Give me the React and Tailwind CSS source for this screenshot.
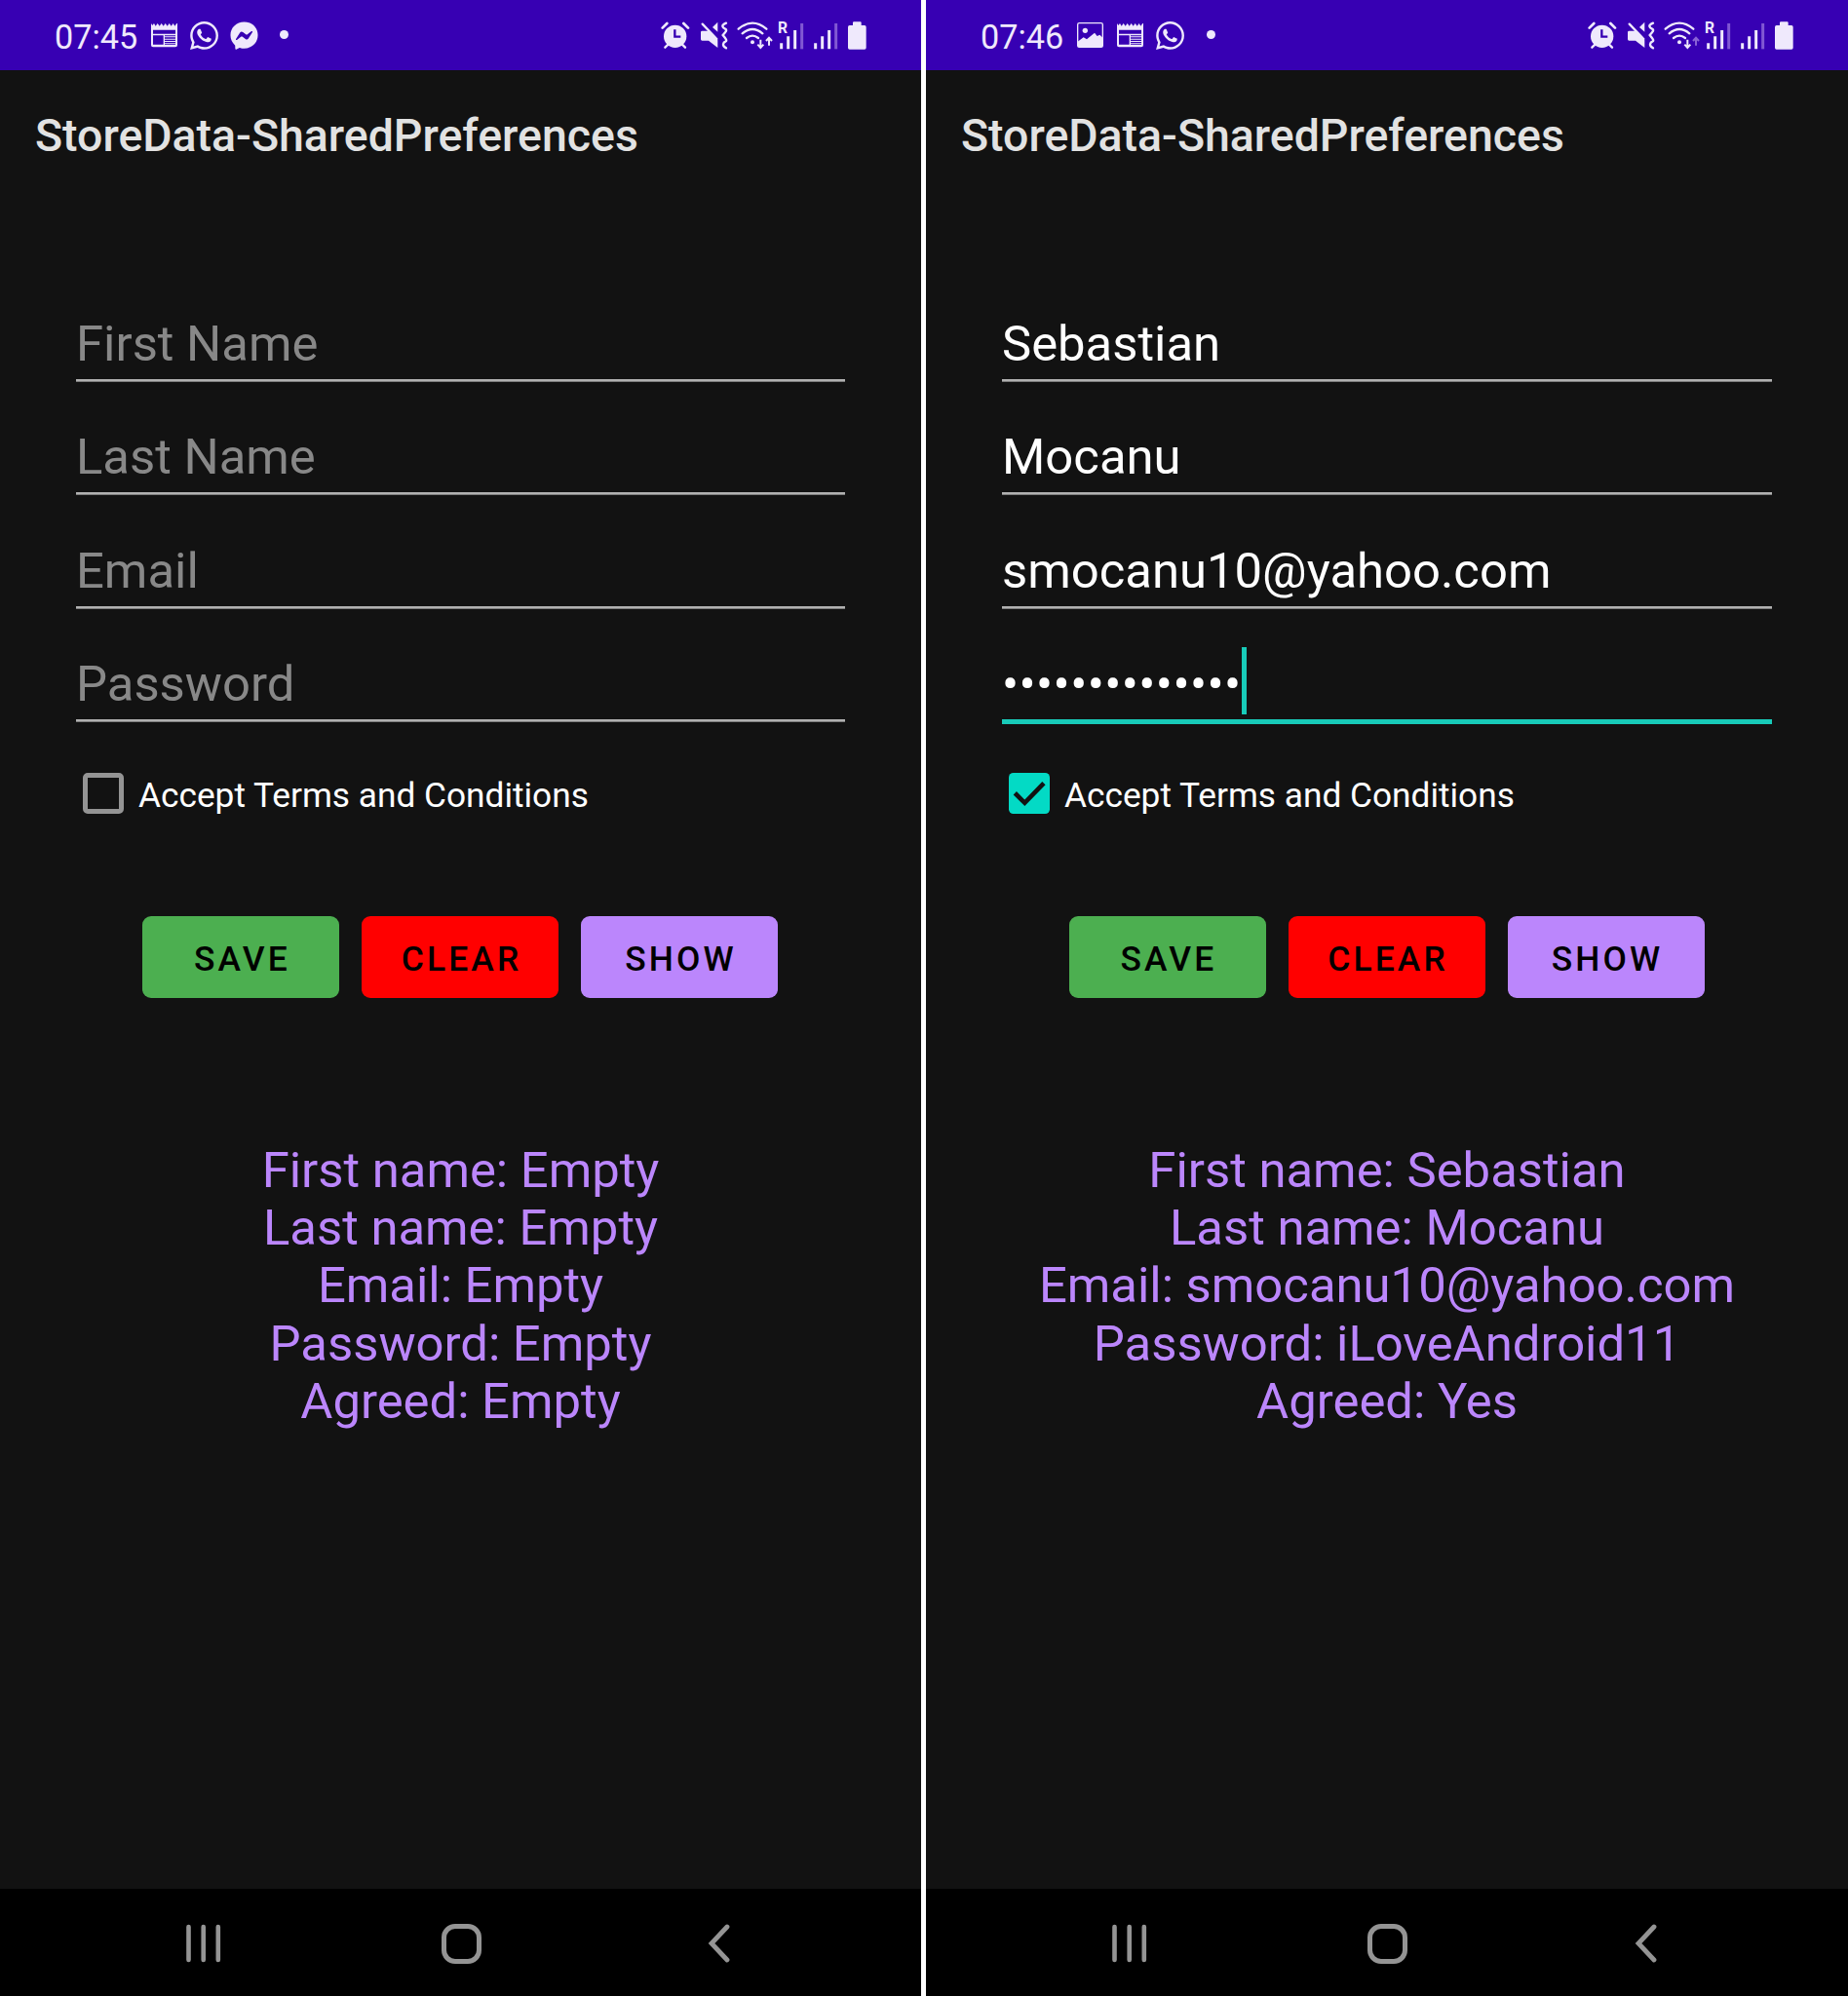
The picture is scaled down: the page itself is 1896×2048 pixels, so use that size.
import { FaWhatsapp, FaFacebookMessenger } from "react-icons/fa";

const INK = "#efe9fc";
const BAR = "#3700b3";

function NewsIcon() {
  return (
    <svg className="h-[72px] w-[27px] shrink-0" viewBox="0 0 81 216">
      <path d="M0 72l4 6 5-6 5 8 6-8 6 8 6-8 6 8 6-8 6 8 6-8 6 8 6-8 5 8 6-8 2 0V139q0 6-6 6H6q-6 0-6-6z" fill={INK} />
      <path d="M6 92h69v12H6zM6 109h32v28H6zM42 109h33v3H42zM42 115h33v4H42zM42 122h33v4H42zM42 129h33v4H42zM42 136h33v2H42z" fill={BAR} />
    </svg>
  );
}

function ImageIcon() {
  return (
    <svg className="h-[72px] w-[27px] shrink-0" viewBox="0 0 81 216">
      <rect x="2" y="71" width="77" height="74" rx="5" fill="none" stroke={INK} strokeWidth="4" />
      <circle cx="25" cy="94" r="8" fill={INK} />
      <path d="M2 128l18-13 10 6 24-20 8 10 8-4 9 9v26q0 3-3 3H5q-3 0-3-3z" fill={INK} />
    </svg>
  );
}

function AlarmIcon() {
  return (
    <svg className="h-[72px] w-[30px] shrink-0" viewBox="55 0 90 216">
      <circle cx="99" cy="112" r="35" fill={INK} />
      <path d="M60 86l14-14M139 86l-14-14" stroke={INK} strokeWidth="8" strokeLinecap="round" />
      <path d="M68 146l10-10M130 146l-10-10" stroke={INK} strokeWidth="7" strokeLinecap="round" />
      <path d="M98 91v22h18" stroke={BAR} strokeWidth="7" fill="none" />
    </svg>
  );
}

function MuteVibrateIcon() {
  return (
    <svg className="h-[72px] w-[30px] shrink-0" viewBox="173 0 90 216">
      <path d="M180 95h20l28 29v23l-28-22h-20q-4 0-4-4V99q0-4 4-4z" fill={INK} />
      <path d="M181 74l44 46" stroke={INK} strokeWidth="7" strokeLinecap="round" />
      <path d="M212 84l16-16v30z" fill={INK} />
      <path d="M254 71q-12 5-11 10t8 8 0 11-7 8 7 9 1 11-7 8 9 12" stroke={INK} strokeWidth="7" fill="none" strokeLinecap="round" />
    </svg>
  );
}

function WifiIcon({ uploading }) {
  return (
    <svg className="h-[72px] w-[38px] shrink-0" viewBox="288 0 114 216">
      <g stroke={INK} strokeWidth="7" fill="none" strokeLinecap="round">
        <path d="M293 89q43-36 86 0" />
        <path d="M305 103q31-26 62 0" />
        <path d="M318 117q18-14 36 0" />
      </g>
      <circle cx="336" cy="130" r="6" fill={INK} />
      <path d="M361 122v24M352 137l9 10 9-10" stroke={INK} strokeWidth="6" fill="none" />
      <path d="M387 140v-23M378 126l9-10 9 10" stroke={uploading ? INK : "#8a63d6"} strokeWidth="6" fill="none" />
    </svg>
  );
}

function Signal({ roaming }) {
  return (
    <svg className="h-[72px] w-[27px] shrink-0" viewBox="415 0 81 216">
      {roaming && (
        <text x="415" y="102" fontSize="47" fontWeight="700" fill={INK} fontFamily="Roboto, sans-serif">R</text>
      )}
      <g stroke={INK} strokeWidth="9" strokeLinecap="butt">
        <path d="M426 133v18M447 112v39M468 93v58" />
        <path d="M489 72v79" stroke="#8158d3" />
      </g>
    </svg>
  );
}

function Battery() {
  return (
    <svg className="h-[72px] w-[19px] shrink-0" viewBox="631 0 57 216">
      <path d="M636 78h10v-8q0-3 3-3h20q3 0 3 3v8h10q5 0 5 5v64q0 5-5 5h-46q-5 0-5-5V83q0-5 5-5z" fill={INK} />
    </svg>
  );
}

function StatusBar({ time, kind }) {
  return (
    <header className="flex h-[72px] bg-[#3700b3] text-[#efe9fc]">
      <span className="ml-[56px] w-[99px] text-[34.2px] leading-[76px]">{time}</span>
      {kind === "empty" ? (
        <>
          <NewsIcon />
          <FaWhatsapp className="ml-[11px] mt-5 size-[33px]" />
          <FaFacebookMessenger className="ml-[10px] mt-[22px] size-[29px]" />
        </>
      ) : (
        <>
          <ImageIcon />
          <span className="w-[14px]" />
          <NewsIcon />
          <FaWhatsapp className="ml-[11px] mt-5 size-[33px]" />
        </>
      )}
      <span className="ml-auto mr-[382.4px] mt-[31px] size-[9px] rounded-full bg-[#efe9fc]" />
      <AlarmIcon />
      <span className="w-[9.4px]" />
      <MuteVibrateIcon />
      <span className="w-[8.3px]" />
      <WifiIcon uploading={kind === "empty"} />
      <span className="w-[4.3px]" />
      <Signal roaming />
      <span className="w-[7.4px]" />
      <Signal />
      <span className="w-[10.6px]" />
      <Battery />
      <span className="w-[55.7px]" />
    </header>
  );
}

const LABELS = ["First Name", "Last Name", "Email", "Password"];

function Field({ label, value, active }) {
  return (
    <div className="flex h-[116.4px] flex-col pt-[40px]">
      <div className="flex h-[74px] shrink-0 items-center">
        <span
          className={
            "mt-[2px] text-[50.8px] leading-[74px] " +
            (value ? "text-white" : "text-[#888888]") +
            (active ? " tracking-[0.4px]" : "")
          }
        >
          {value || label}
        </span>
        {active && <span className="-mt-[5px] h-[69px] w-[5px] bg-[#18cbb9]" />}
      </div>
      {active ? (
        <div className="h-[5px] shrink-0 bg-[#18cbb9]" />
      ) : (
        <div className="h-[3px] shrink-0 border-b border-[#7c7c7c] bg-[#b0b0b0]" />
      )}
    </div>
  );
}

function Checkbox({ checked }) {
  return checked ? (
    <svg className="size-[42px]" viewBox="0 0 18 18">
      <rect width="18" height="18" rx="2" fill="#03dac5" />
      <path d="M2.7 8.9l4.3 4.3 8.4-8.6" fill="none" stroke="#121212" strokeWidth="2" />
    </svg>
  ) : (
    <div className="size-[42px] rounded-[5px] border-[5px] border-[#949494]" />
  );
}

function AppButton({ className, children }) {
  return (
    <button className={"flex h-[84px] w-[202px] items-center justify-center rounded-[9px] pl-[3px] pt-[5px] text-[35.4px] font-medium tracking-[0.0892em] text-black " + className}>
      {children}
    </button>
  );
}

function NavBar() {
  return (
    <nav className="flex h-[110px] items-center justify-between bg-black pl-[190px] pr-[195px] text-[#949494]">
      <svg width="38" height="42" viewBox="0 0 38 42" stroke="currentColor" strokeWidth="4.6" strokeLinecap="round">
        <path d="M3.5 5v34M18.7 5v34M33.8 5v34" />
      </svg>
      <div className="mr-[8px] mt-[3px] h-[41px] w-[41px] rounded-[14px] border-[5px] border-[#949494]" />
      <svg width="24" height="42" viewBox="0 0 24 42" fill="none" stroke="currentColor" strokeWidth="4.8" strokeLinecap="round">
        <path d="M20 5L4 22l16 17" />
      </svg>
    </nav>
  );
}

function Phone({ className, kind, time, values, results }) {
  const filled = kind === "filled";
  return (
    <section className={"flex h-[2048px] flex-col bg-[#121212] " + className}>
      <StatusBar time={time} kind={kind} />
      <h1 className="ml-[36px] h-[134px] text-[46.45px] font-medium leading-[134px] text-[#e2e2e2]">StoreData-SharedPreferences</h1>
      <div className="mt-[69px] px-[78px]">
        {LABELS.map((label, i) => (
          <Field key={label} label={label} value={values[i]} active={filled && i === 3} />
        ))}
      </div>
      <div className="ml-[85px] mt-[52px] flex h-[42px] items-center">
        <Checkbox checked={filled} />
        <span className="ml-[15px] mt-[5px] text-[35.25px] leading-[42px] text-white">Accept Terms and Conditions</span>
      </div>
      <div className="mr-[1px] mt-[105px] flex justify-center gap-[23px]">
        <AppButton className="bg-[#4caf50]">SAVE</AppButton>
        <AppButton className="bg-[#ff0000]">CLEAR</AppButton>
        <AppButton className="bg-[#bb86fc]">SHOW</AppButton>
      </div>
      <div className="mt-[147px] flex-1 text-center text-[50.8px] leading-[59.4px] text-[#bb86fc]">
        {results.map((line) => (
          <p key={line}>{line}</p>
        ))}
      </div>
      <NavBar />
    </section>
  );
}

export default function App() {
  return (
    <main className="flex h-[2048px] w-[1896px] gap-[5px] overflow-hidden bg-white font-[Roboto,sans-serif]">
      <Phone
        className="w-[945px]"
        kind="empty"
        time="07:45"
        values={[]}
        results={["First name: Empty", "Last name: Empty", "Email: Empty", "Password: Empty", "Agreed: Empty"]}
      />
      <Phone
        className="flex-1"
        kind="filled"
        time="07:46"
        values={["Sebastian", "Mocanu", "smocanu10@yahoo.com", "••••••••••••••"]}
        results={["First name: Sebastian", "Last name: Mocanu", "Email: smocanu10@yahoo.com", "Password: iLoveAndroid11", "Agreed: Yes"]}
      />
    </main>
  );
}
